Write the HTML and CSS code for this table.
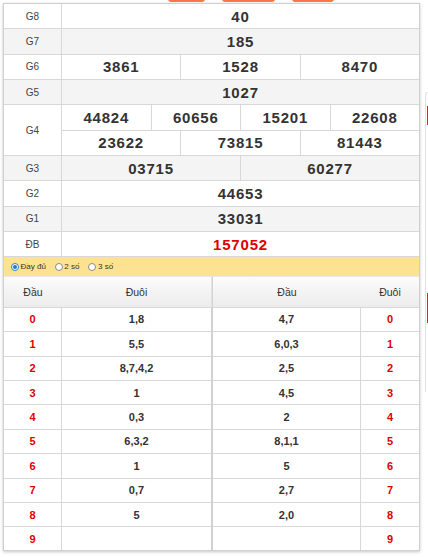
FILE: index.html
```html
<!DOCTYPE html>
<html lang="vi">
<head>
<meta charset="utf-8">
<title>KQ</title>
<link rel="stylesheet" href="styles.css">
</head>
<body>
<div class="page">
  <div class="main">
    <div class="tabs"><span class="tab t1"></span><span class="tab t2"></span><span class="tab t3"></span></div>
    <div class="box">
      <div class="kq">
        <div class="row"><div class="lbl">G8</div><div class="vals"><div class="v">40</div></div></div>
        <div class="row alt"><div class="lbl">G7</div><div class="vals"><div class="v">185</div></div></div>
        <div class="row"><div class="lbl">G6</div><div class="vals"><div class="v">3861</div><div class="v">1528</div><div class="v">8470</div></div></div>
        <div class="row alt"><div class="lbl">G5</div><div class="vals"><div class="v">1027</div></div></div>
        <div class="row dbl"><div class="lbl">G4</div>
          <div class="stack">
            <div class="vals sub"><div class="v">44824</div><div class="v">60656</div><div class="v">15201</div><div class="v">22608</div></div>
            <div class="vals"><div class="v">23622</div><div class="v">73815</div><div class="v">81443</div></div>
          </div>
        </div>
        <div class="row alt"><div class="lbl">G3</div><div class="vals"><div class="v">03715</div><div class="v">60277</div></div></div>
        <div class="row"><div class="lbl">G2</div><div class="vals"><div class="v">44653</div></div></div>
        <div class="row alt"><div class="lbl">G1</div><div class="vals"><div class="v">33031</div></div></div>
        <div class="row"><div class="lbl">ĐB</div><div class="vals"><div class="v red">157052</div></div></div>
      </div>
      <div class="opts">
        <label class="opt"><span class="radio on"></span>Đầy đủ</label>
        <label class="opt"><span class="radio"></span>2 số</label>
        <label class="opt"><span class="radio"></span>3 số</label>
      </div>
      <div class="lt">
        <div class="half left">
          <div class="hd">Đầu</div><div class="hd sep">Đuôi</div>
          <div class="k">0</div><div class="d">1,8</div>
          <div class="k">1</div><div class="d">5,5</div>
          <div class="k">2</div><div class="d">8,7,4,2</div>
          <div class="k">3</div><div class="d">1</div>
          <div class="k">4</div><div class="d">0,3</div>
          <div class="k">5</div><div class="d">6,3,2</div>
          <div class="k">6</div><div class="d">1</div>
          <div class="k">7</div><div class="d">0,7</div>
          <div class="k">8</div><div class="d">5</div>
          <div class="k last">9</div><div class="d last"></div>
        </div>
        <div class="half right">
          <div class="hd">Đầu</div><div class="hd">Đuôi</div>
          <div class="d">4,7</div><div class="k">0</div>
          <div class="d">6,0,3</div><div class="k">1</div>
          <div class="d">2,5</div><div class="k">2</div>
          <div class="d">4,5</div><div class="k">3</div>
          <div class="d">2</div><div class="k">4</div>
          <div class="d">8,1,1</div><div class="k">5</div>
          <div class="d">5</div><div class="k">6</div>
          <div class="d">2,7</div><div class="k">7</div>
          <div class="d">2,0</div><div class="k">8</div>
          <div class="d last"></div><div class="k last">9</div>
        </div>
      </div>
    </div>
  </div>
  <div class="aside">
    <div class="panel">
      <div class="mark m1"></div>
      <div class="mark m2"></div>
    </div>
  </div>
</div>
</body>
</html>
```

FILE: styles.css
```css
* { box-sizing: border-box; }
html, body { margin: 0; padding: 0; background: #fff; }
body {
  width: 428px;
  height: 558px;
  overflow: hidden;
  font-family: "Liberation Sans", Arial, sans-serif;
  color: #333;
}
.page { display: flex; align-items: flex-start; }
.main { width: 417px; margin-left: 3px; flex: none; }

.tabs {
  display: flex;
  align-items: flex-end;
  height: 2px;
  margin-bottom: 1px;
  padding-left: 165px;
  gap: 17px;
}
.tab {
  height: 20px;
  background: #ff7447;
  border-radius: 0 0 3px 3px;
  flex: none;
}
.t1 { width: 37px; }
.t2 { width: 53px; }
.t3 { width: 42px; }

.box {
  border: 1px solid #cfcfcf;
  box-shadow: 0 1px 3px rgba(0,0,0,0.22);
  background: #fff;
}

.kq { display: flex; flex-direction: column; }
.row {
  display: flex;
  height: 25.33px;
  border-bottom: 1px solid #d8d8d8;
}
.row.dbl { height: 50.66px; }
.row.alt { background: #f4f4f4; }
.lbl {
  width: 58px;
  flex: none;
  border-right: 1px solid #d8d8d8;
  display: flex;
  align-items: center;
  justify-content: center;
  font-size: 10px;
  color: #444;
}
.stack { flex: 1; display: flex; flex-direction: column; }
.stack .vals { flex: 1; }
.vals.sub { border-bottom: 1px solid #d8d8d8; }
.vals { flex: 1; display: flex; }
.v {
  flex: 1;
  display: flex;
  align-items: center;
  justify-content: center;
  font-size: 15px;
  font-weight: bold;
  letter-spacing: 0.8px;
  color: #333;
}
.v + .v { border-left: 1px solid #d8d8d8; }
.v.red { color: #e00000; }

.opts {
  height: 20px;
  background: #fde391;
  display: flex;
  align-items: center;
  padding-left: 7px;
  gap: 9px;
  font-size: 8px;
  color: #333;
  border-bottom: 1px solid #e9e9e9;
}
.opt { display: flex; align-items: center; gap: 1.5px; }
.radio {
  width: 8px;
  height: 8px;
  border-radius: 50%;
  border: 1px solid #8a8a8a;
  background: #fff;
  display: inline-block;
  position: relative;
}
.radio.on { border-color: #2a7de1; }
.radio.on::after {
  content: "";
  position: absolute;
  left: 1px; top: 1px;
  width: 4px; height: 4px;
  border-radius: 50%;
  background: #1f74dd;
}

.lt { display: flex; }
.half { display: grid; grid-template-rows: 30.5px repeat(9, 24.4px) 22.6px; }
.half.left { width: 208px; grid-template-columns: 58px 1fr; }
.half.right { width: 207px; grid-template-columns: 1fr 58px; border-left: 1px solid #d2d2d2; }
.hd {
  background: linear-gradient(#fcfcfc, #ececec);
  border-bottom: 1px solid #d8d8d8;
  display: flex;
  align-items: center;
  justify-content: center;
  font-size: 10.5px;
  color: #333;
}
.half.left .hd.sep { border-right: 1px solid #e4e4e4; }
.k, .d {
  display: flex;
  align-items: center;
  justify-content: center;
  font-size: 11px;
  font-weight: bold;
  border-bottom: 1px solid #d8d8d8;
}
.k { color: #e00000; }
.d { color: #333; }
.half.left .k { border-right: 1px solid #d8d8d8; }
.half.left .d { border-right: 1px solid #cfcfcf; }
.half.right .d { border-right: 1px solid #d8d8d8; }
.k.last, .d.last { border-bottom: none; }

.aside { flex: 1; padding-left: 5px; padding-top: 92px; }
.panel {
  height: 300px;
  border-left: 1px solid #e2e2e2;
  border-top: 1px solid #e2e2e2;
  border-radius: 3px 0 0 0;
  padding-left: 1px;
}
.mark { width: 2px; background: #e61c1c; }
.m1 { height: 19px; margin-top: 13px; }
.m2 { height: 30px; margin-top: 168px; }
```
